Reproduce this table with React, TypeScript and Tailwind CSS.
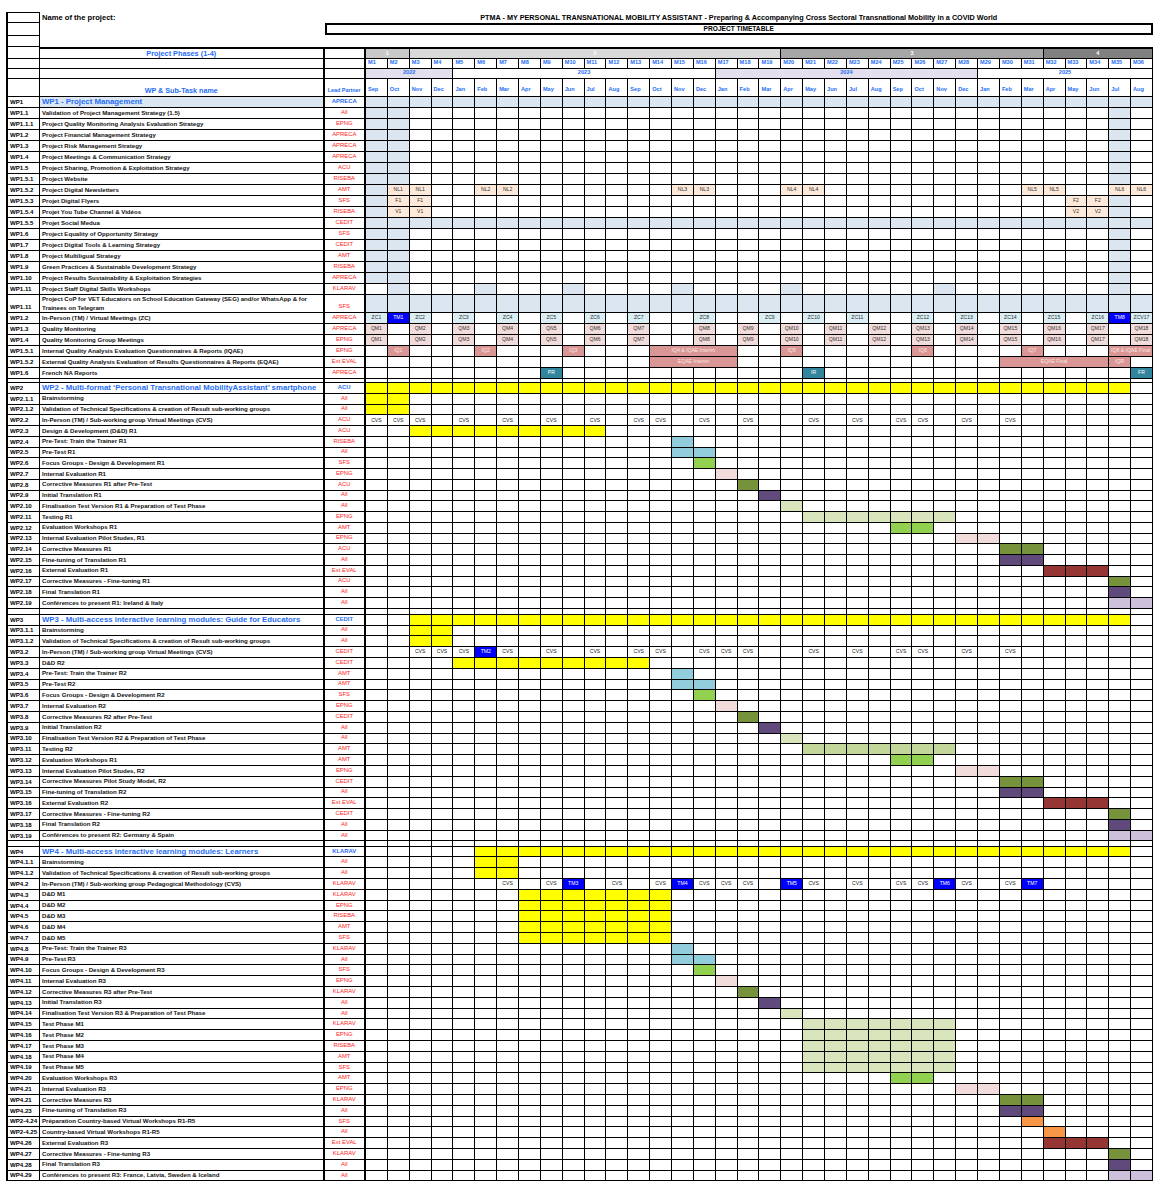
import React from "react";

type C = { s: number; n?: number; k: string; t?: string };
type R = {
  id: string;
  name: string;
  lp: string;
  cells: C[];
  head?: boolean;
  nameBg?: boolean;
  tall?: boolean;
};

const FILL: Record<string, string> = {
  lb: "bg-[#dce6f1]",
  pe: "bg-[#fde9d9] text-[#333]",
  zc: "bg-[#daeef3] text-[#333]",
  tm: "bg-[#0000ff] text-white",
  qm: "bg-[#f2dcdb] text-[#333]",
  iq: "bg-[#da9694] text-[#fbe7e6]",
  pr: "bg-[#31859c] text-white",
  y: "bg-[#ffff00]",
  tq: "bg-[#92cddc]",
  gr: "bg-[#92d050]",
  pk: "bg-[#f2dcdb]",
  ol: "bg-[#76933c]",
  pu: "bg-[#604a7b]",
  lg: "bg-[#d8e4bc]",
  lg2: "bg-[#c4d79b]",
  dr: "bg-[#963634]",
  lv: "bg-[#ccc0da]",
  or: "bg-[#f79646]",
  cv: "text-[#222]",
  ph1: "bg-[#c9c9c9] text-white",
  ph2: "bg-[#d9d9d9] text-white",
  ph3: "bg-[#a6a6a6] text-white",
  ph4: "bg-[#808080] text-white",
  yl: "bg-[#e4dfec]",
  yw: "bg-white",
};

const GRID = "grid grid-cols-[34px_284.5px_41.5px_repeat(36,21.86px)]";

const at = (k: string, cols: number[]): C[] => cols.map((s) => ({ s, k }));
const run = (k: string, a: number, b: number): C[] =>
  Array.from({ length: b - a + 1 }, (_, i) => ({ s: a + i, k }));
const txt = (k: string, list: [number, string][]): C[] => list.map(([s, t]) => ({ s, k, t }));
const cvs = (cols: number[]): C[] => cols.map((s) => ({ s, k: "cv", t: "CVS" }));

const LB = [0, 1, 34];

const WP1: R[] = [
  { id: "WP1", name: "WP1 - Project Management", lp: "APRECA", head: true, nameBg: true, cells: run("lb", 0, 35) },
  { id: "WP1.1", name: "Validation of Project Management Strategy (1.5)", lp: "All", cells: at("lb", LB) },
  { id: "WP1.1.1", name: "Project Quality Monitoring Analysis Evaluation Strategy", lp: "EPNG", cells: at("lb", LB) },
  { id: "WP1.2", name: "Project Financial Management Strategy", lp: "APRECA", cells: at("lb", LB) },
  { id: "WP1.3", name: "Project Risk Management Strategy", lp: "APRECA", cells: at("lb", LB) },
  { id: "WP1.4", name: "Project Meetings & Communication Strategy", lp: "APRECA", cells: at("lb", LB) },
  { id: "WP1.5", name: "Project Sharing, Promotion & Exploitation Strategy", lp: "ACU", cells: at("lb", LB) },
  { id: "WP1.5.1", name: "Project Website", lp: "RISEBA", cells: at("lb", LB) },
  {
    id: "WP1.5.2",
    name: "Project Digital Newsletters",
    lp: "AMT",
    cells: [
      { s: 0, k: "lb" },
      ...txt("pe", [
        [1, "NL1"], [2, "NL1"], [5, "NL2"], [6, "NL2"], [14, "NL3"], [15, "NL3"],
        [19, "NL4"], [20, "NL4"], [30, "NL5"], [31, "NL5"], [34, "NL6"], [35, "NL6"],
      ]),
    ],
  },
  {
    id: "WP1.5.3",
    name: "Projet Digital Flyers",
    lp: "SFS",
    cells: [...at("lb", [0, 34]), ...txt("pe", [[1, "F1"], [2, "F1"], [32, "F2"], [33, "F2"]])],
  },
  {
    id: "WP1.5.4",
    name: "Projet You Tube Channel & Vidéos",
    lp: "RISEBA",
    cells: [...at("lb", [0, 34]), ...txt("pe", [[1, "V1"], [2, "V1"], [32, "V2"], [33, "V2"]])],
  },
  { id: "WP1.5.5", name: "Projet Social Medua", lp: "CEDIT", cells: run("lb", 0, 35) },
  { id: "WP1.6", name: "Project Equality of Opportunity Strategy", lp: "SFS", cells: at("lb", LB) },
  { id: "WP1.7", name: "Project Digital Tools & Learning Strategy", lp: "CEDIT", cells: at("lb", LB) },
  { id: "WP1.8", name: "Project Multiligual Strategy", lp: "AMT", cells: at("lb", LB) },
  { id: "WP1.9", name: "Green Practices & Sustainable Development Strategy", lp: "RISEBA", cells: at("lb", LB) },
  { id: "WP1.10", name: "Project Results Sustainability & Exploitation Strategies", lp: "APRECA", cells: at("lb", LB) },
  { id: "WP1.11", name: "Project Staff Digital Skills Workshops", lp: "KLARAV", cells: at("lb", [1, 5, 9, 14, 19, 26, 34]) },
  {
    id: "WP1.11",
    name: "Project CoP for VET Educators on School Education Gateway (SEG) and/or WhatsApp & for Trainees on Telegram",
    lp: "SFS",
    tall: true,
    cells: run("lb", 0, 35),
  },
  {
    id: "WP1.2",
    name: "In-Person (TM) / Virtual Meetings (ZC)",
    lp: "APRECA",
    cells: [
      ...txt("zc", [
        [0, "ZC1"], [2, "ZC2"], [4, "ZC3"], [6, "ZC4"], [8, "ZC5"], [10, "ZC6"], [12, "ZC7"], [15, "ZC8"],
        [18, "ZC9"], [20, "ZC10"], [22, "ZC11"], [25, "ZC12"], [27, "ZC13"], [29, "ZC14"], [31, "ZC15"],
        [33, "ZC16"], [35, "ZCV17"],
      ]),
      ...txt("tm", [[1, "TM1"], [34, "TM8"]]),
    ],
  },
  ...["Quality Monitoring", "Quality Monitoring Group Meetings"].map(
    (name, i): R => ({
      id: i === 0 ? "WP1.3" : "WP1.4",
      name,
      lp: i === 0 ? "APRECA" : "EPNG",
      cells: txt("qm", [
        [0, "QM1"], [2, "QM2"], [4, "QM3"], [6, "QM4"], [8, "QN5"], [10, "QM6"], [12, "QM7"], [15, "QM8"],
        [17, "QM9"], [19, "QM10"], [21, "QM11"], [23, "QM12"], [25, "QM13"], [27, "QM14"], [29, "QM15"],
        [31, "QM16"], [33, "QM17"], [35, "QM18"],
      ]),
    })
  ),
  {
    id: "WP1.5.1",
    name: "Internal Quality Analysis Evaluation Questionnaires & Reports (IQAE)",
    lp: "EPNG",
    cells: [
      ...txt("iq", [[1, "IQ1"], [5, "IQ2"], [9, "IQ3"], [19, "IQ5"], [25, "IQ6"], [30, "IQ7"]]),
      { s: 13, n: 4, k: "iq", t: "IQ4 & IQAE Interim" },
      { s: 34, n: 2, k: "iq", t: "IQ8 & IQAE Final" },
    ],
  },
  {
    id: "WP1.5.2",
    name: "External Quality Analysis Evaluation of Results Questionnaires & Reports (EQAE)",
    lp: "Ext EVAL",
    cells: [
      { s: 13, n: 4, k: "iq", t: "EQAE Interim" },
      { s: 29, n: 5, k: "iq", t: "EQAE Final" },
      { s: 34, k: "iq", t: "IQR" },
    ],
  },
  { id: "WP1.6", name: "French NA Reports", lp: "APRECA", cells: txt("pr", [[8, "PR"], [20, "IR"], [35, "FR"]]) },
];

const tail = (n: string, lpList: string[], names: string[], testCls: string): R[] => {
  const cellsList: C[][] = [
    at("tq", [14]),
    at("tq", [14, 15]),
    at("gr", [15]),
    at("pk", [16]),
    at("ol", [17]),
    at("pu", [18]),
    at("lg", [19]),
    run(testCls, 20, 26),
    at("gr", [24, 25]),
    at("pk", [27, 28]),
    at("ol", [29, 30]),
    at("pu", [29, 30]),
    run("dr", 31, 33),
    at("ol", [34]),
    at("pu", [34]),
    at("lv", [34, 35]),
  ];
  return names.map((name, i) => ({ id: `WP${n}.${i + 4}`, name, lp: lpList[i], cells: cellsList[i] }));
};

const WP2: R[] = [
  { id: "WP2", name: "WP2 - Multi-format \u2018Personal Transnational MobilityAssistant\u2019 smartphone", lp: "ACU", head: true, cells: run("y", 0, 34) },
  { id: "WP2.1.1", name: "Brainstorming", lp: "All", cells: run("y", 0, 1) },
  { id: "WP2.1.2", name: "Validation of Technical Specifications & creation of Result sub-working groups", lp: "All", cells: run("y", 0, 1) },
  { id: "WP2.2", name: "In-Person (TM) / Sub-working group Virtual Meetings (CVS)", lp: "ACU", cells: cvs([0, 1, 2, 4, 6, 8, 10, 12, 13, 15, 17, 20, 22, 24, 25, 27, 29]) },
  { id: "WP2.3", name: "Design & Development (D&D) R1", lp: "ACU", cells: run("y", 2, 10) },
  ...tail(
    "2",
    ["RISEBA", "All", "SFS", "EPNG", "ACU", "All", "All", "EPNG", "AMT", "EPNG", "ACU", "All", "Ext EVAL", "ACU", "All", "All"],
    [
      "Pre-Test: Train the Trainer R1",
      "Pre-Test R1",
      "Focus Groups - Design & Development R1",
      "Internal Evaluation R1",
      "Corrective Measures R1 after Pre-Test",
      "Initial Translation R1",
      "Finalisation Test Version R1 & Preparation of Test Phase",
      "Testing R1",
      "Evaluation Workshops R1",
      "Internal Evaluation Pilot Studes, R1",
      "Corrective Measures R1",
      "Fine-tuning of Translation R1",
      "External Evaluation R1",
      "Corrective Measures - Fine-tuning R1",
      "Final Translation R1",
      "Conférences to present R1: Ireland & Italy",
    ],
    "lg"
  ),
];

const WP3: R[] = [
  { id: "WP3", name: "WP3 - Multi-access interactive learning modules: Guide for Educators", lp: "CEDIT", head: true, cells: run("y", 2, 34) },
  { id: "WP3.1.1", name: "Brainstorming", lp: "All", cells: run("y", 2, 3) },
  { id: "WP3.1.2", name: "Validation of Technical Specifications & creation of Result sub-working groups", lp: "All", cells: run("y", 2, 3) },
  {
    id: "WP3.2",
    name: "In-Person (TM) / Sub-working group Virtual Meetings (CVS)",
    lp: "CEDIT",
    cells: [...cvs([2, 3, 4, 6, 8, 10, 12, 13, 15, 16, 17, 20, 22, 24, 25, 27, 29]), { s: 5, k: "tm", t: "TM2" }],
  },
  { id: "WP3.3", name: "D&D R2", lp: "CEDIT", cells: run("y", 4, 12) },
  ...tail(
    "3",
    ["AMT", "AMT", "SFS", "EPNG", "CEDIT", "All", "All", "AMT", "AMT", "EPNG", "CEDIT", "All", "Ext EVAL", "CEDIT", "All", "All"],
    [
      "Pre-Test: Train the Trainer R2",
      "Pre-Test R2",
      "Focus Groups - Design & Development R2",
      "Internal Evaluation R2",
      "Corrective Measures R2 after Pre-Test",
      "Initial Translation R2",
      "Finalisation Test Version R2 & Preparation of Test Phase",
      "Testing R2",
      "Evaluation Workshops R1",
      "Internal Evaluation Pilot Studes, R2",
      "Corrective Measures Pilot Study Model, R2",
      "Fine-tuning of Translation R2",
      "External Evaluation R2",
      "Corrective Measures - Fine-tuning R2",
      "Final Translation R2",
      "Conférences to present R2: Germany & Spain",
    ],
    "lg2"
  ),
];

const WP4: R[] = [
  { id: "WP4", name: "WP4 - Multi-access interactive learning modules: Learners", lp: "KLARAV", head: true, cells: run("y", 5, 34) },
  { id: "WP4.1.1", name: "Brainstorming", lp: "All", cells: run("y", 5, 6) },
  { id: "WP4.1.2", name: "Validation of Technical Specifications & creation of Result sub-working groups", lp: "All", cells: run("y", 5, 6) },
  {
    id: "WP4.2",
    name: "In-Person (TM) /  Sub-working group Pedagogical Methodology (CVS)",
    lp: "KLARAV",
    cells: [
      ...cvs([6, 8, 11, 13, 15, 16, 17, 20, 22, 24, 25, 27, 29]),
      ...txt("tm", [[9, "TM3"], [14, "TM4"], [19, "TM5"], [26, "TM6"], [30, "TM7"]]),
    ],
  },
  { id: "WP4.3", name: "D&D M1", lp: "KLARAV", cells: run("y", 7, 13) },
  { id: "WP4.4", name: "D&D M2", lp: "EPNG", cells: run("y", 7, 13) },
  { id: "WP4.5", name: "D&D M3", lp: "RISEBA", cells: run("y", 7, 13) },
  { id: "WP4.6", name: "D&D M4", lp: "AMT", cells: run("y", 7, 13) },
  { id: "WP4.7", name: "D&D M5", lp: "SFS", cells: run("y", 7, 13) },
  { id: "WP4.8", name: "Pre-Test: Train the Trainer R3", lp: "KLARAV", cells: at("tq", [14]) },
  { id: "WP4.9", name: "Pre-Test R3", lp: "All", cells: at("tq", [14, 15]) },
  { id: "WP4.10", name: "Focus Groups - Design & Development R3", lp: "SFS", cells: at("gr", [15]) },
  { id: "WP4.11", name: "Internal Evaluation R3", lp: "EPNG", cells: at("pk", [16]) },
  { id: "WP4.12", name: "Corrective Measures R3 after Pre-Test", lp: "KLARAV", cells: at("ol", [17]) },
  { id: "WP4.13", name: "Initial Translation R3", lp: "All", cells: at("pu", [18]) },
  { id: "WP4.14", name: "Finalisation Test Version R3 & Preparation of Test Phase", lp: "All", cells: at("lg", [19]) },
  { id: "WP4.15", name: "Test Phase M1", lp: "KLARAV", cells: run("lg", 20, 26) },
  { id: "WP4.16", name: "Test Phase M2", lp: "EPNG", cells: run("lg", 20, 26) },
  { id: "WP4.17", name: "Test Phase M3", lp: "RISEBA", cells: run("lg", 20, 26) },
  { id: "WP4.18", name: "Test Phase M4", lp: "AMT", cells: run("lg", 20, 26) },
  { id: "WP4.19", name: "Test Phase M5", lp: "SFS", cells: run("lg", 20, 26) },
  { id: "WP4.20", name: "Evaluation Workshops R3", lp: "AMT", cells: at("gr", [24, 25]) },
  { id: "WP4.21", name: "Internal Evaluation R3", lp: "EPNG", cells: at("pk", [27, 28]) },
  { id: "WP4.21", name: "Corrective Measures R3", lp: "KLARAV", cells: at("ol", [29, 30]) },
  { id: "WP4.23", name: "Fine-tuning of Translation R3", lp: "All", cells: at("pu", [29, 30]) },
  { id: "WP2-4.24", name: "Préparation Country-based Virtual Workshops R1-R5", lp: "SFS", cells: at("or", [30]) },
  { id: "WP2-4.25", name: "Country-based Virtual Workshops R1-R5", lp: "All", cells: at("or", [31]) },
  { id: "WP4.26", name: "External Evaluation R3", lp: "Ext EVAL", cells: run("dr", 31, 33) },
  { id: "WP4.27", name: "Corrective Measures - Fine-tuning R3", lp: "KLARAV", cells: at("ol", [34]) },
  { id: "WP4.28", name: "Final Translation R3", lp: "All", cells: at("pu", [34]) },
  { id: "WP4.29", name: "Conférences to present R3: France, Latvia, Sweden & Iceland", lp: "All", cells: at("lv", [34, 35]) },
];

const BLUE = "text-[#1f6ef5]";

function MonthCells({ cells, cls }: { cells: C[]; cls: string }) {
  const map = new Map<number, C>();
  cells.forEach((c) => map.set(c.s, c));
  const out: React.ReactNode[] = [];
  for (let i = 0; i < 36; ) {
    const c = map.get(i);
    const n = c?.n ?? 1;
    out.push(
      <div
        key={i}
        className={`flex items-center justify-center overflow-hidden whitespace-nowrap border-r border-b border-black leading-none ${cls} ${c ? FILL[c.k] : ""}`}
        style={n > 1 ? { gridColumn: `span ${n}` } : undefined}
      >
        {c?.t}
      </div>
    );
    i += n;
  }
  return <>{out}</>;
}

function Row({ r, h }: { r: R; h: string }) {
  const align = r.tall ? "items-end pb-[2px]" : "items-center";
  return (
    <div className={`${GRID} ${r.tall ? "h-[18px]" : h}`}>
      <div className={`flex ${align} overflow-hidden whitespace-nowrap border-l-2 border-r border-b border-black pl-[2px] text-[6.1px] font-bold leading-none text-black`}>
        {r.id}
      </div>
      <div
        className={`flex items-center overflow-hidden border-r-2 border-b border-black pl-[2px] font-bold ${
          r.head ? `text-[7.8px] leading-none whitespace-nowrap ${BLUE}` : "text-[6.1px] leading-[8.6px] text-[#111]"
        } ${r.nameBg ? "bg-[#dce6f1]" : ""}`}
      >
        {r.name}
      </div>
      <div
        className={`flex ${align} justify-center overflow-hidden whitespace-nowrap border-r-2 border-b border-black text-[5.9px] leading-none ${
          r.head ? `${BLUE} font-bold` : "text-[#ff2424]"
        }`}
      >
        {r.lp}
      </div>
      <MonthCells cells={r.cells} cls="text-[5.1px]" />
    </div>
  );
}

function Spacer({ h }: { h: string }) {
  return (
    <div className={`${GRID} ${h}`}>
      <div className="border-l-2 border-r border-b border-black" />
      <div className="border-r-2 border-b border-black" />
      <div className="border-r-2 border-b border-black" />
      <MonthCells cells={[]} cls="" />
    </div>
  );
}

const MONTHS = ["Sep", "Oct", "Nov", "Dec", "Jan", "Feb", "Mar", "Apr", "May", "Jun", "Jul", "Aug"];

export default function App() {
  return (
    <div className="min-h-[1186px] bg-white pt-[12px] pl-[6px] font-['Liberation_Sans',Arial,sans-serif] text-black">
      <div className="w-[1147px]">
        {/* Row 1 */}
        <div className={`${GRID} h-[11px]`}>
          <div className="border-l-2 border-t border-r border-b border-black" />
          <div className="flex items-center pl-[2px] text-[7.6px] font-bold leading-none">Name of the project:</div>
          <div className="col-[3/-1] flex items-center justify-center whitespace-nowrap text-[7.25px] font-bold leading-none">
            PTMA - MY PERSONAL TRANSNATIONAL MOBILITY ASSISTANT - Preparing &amp; Accompanying Cross Sectoral Transnational Mobility in a COVID World
          </div>
        </div>
        {/* Row 2 */}
        <div className={`${GRID} h-[12.5px]`}>
          <div className="border-l-2 border-r border-b border-black" />
          <div />
          <div className="col-[3/-1] flex h-[12px] items-center justify-center border-2 border-black text-[6.6px] font-bold leading-none">
            PROJECT TIMETABLE
          </div>
        </div>
        {/* Row 3 */}
        <div className={`${GRID} h-[11px]`}>
          <div className="border-l-2 border-r border-b border-black" />
        </div>
        {/* Row 4 phases */}
        <div className={`${GRID} h-[12.5px]`}>
          <div className="border-l-2 border-r border-b border-black" />
          <div className={`flex items-center justify-center border-t-2 border-r-2 border-b border-black text-[7.3px] font-bold leading-none ${BLUE}`}>
            Project Phases (1-4)
          </div>
          <div className="border-t-2 border-r-2 border-b border-black" />
          {[
            { n: 2, k: "ph1", t: "1" },
            { n: 17, k: "ph2", t: "2" },
            { n: 12, k: "ph3", t: "3" },
            { n: 5, k: "ph4", t: "4" },
          ].map((p) => (
            <div
              key={p.t}
              className={`flex items-center justify-center border-t-2 border-r border-b border-black text-[5.5px] font-bold leading-none ${FILL[p.k]}`}
              style={{ gridColumn: `span ${p.n}` }}
            >
              {p.t}
            </div>
          ))}
        </div>
        {/* Row 5 M */}
        <div className={`${GRID} h-[9.5px]`}>
          <div className="border-l-2 border-r border-b border-black" />
          <div className="border-r-2 border-b border-black" />
          <div className="border-r-2 border-b border-black" />
          {Array.from({ length: 36 }, (_, i) => (
            <div key={i} className={`flex items-center overflow-hidden whitespace-nowrap border-r border-b border-black pl-[2px] text-[5.6px] font-bold leading-none ${BLUE}`}>
              M{i + 1}
            </div>
          ))}
        </div>
        {/* Row 6 years */}
        <div className={`${GRID} h-[10px]`}>
          <div className="border-l-2 border-r border-b border-black" />
          <div className="border-r-2 border-b border-black" />
          <div className="border-r-2 border-b border-black" />
          {[
            { n: 4, k: "yl", t: "2022" },
            { n: 12, k: "yw", t: "2023" },
            { n: 12, k: "yl", t: "2024" },
            { n: 8, k: "yw", t: "2025" },
          ].map((p) => (
            <div
              key={p.t}
              className={`flex items-center justify-center border-r border-b border-black text-[5.6px] font-bold leading-none ${BLUE} ${FILL[p.k]}`}
              style={{ gridColumn: `span ${p.n}` }}
            >
              {p.t}
            </div>
          ))}
        </div>
        {/* Row 7 months */}
        <div className={`${GRID} h-[18.5px]`}>
          <div className="border-l-2 border-r border-b border-black" />
          <div className={`flex items-end justify-center border-r-2 border-b border-black pb-[2px] text-[7.2px] font-bold leading-none ${BLUE}`}>
            WP &amp; Sub-Task name
          </div>
          <div className={`flex items-end justify-center whitespace-nowrap border-r-2 border-b border-black pb-[3px] text-[5.4px] font-bold leading-none ${BLUE}`}>
            Lead Partner
          </div>
          {Array.from({ length: 36 }, (_, i) => (
            <div key={i} className={`flex items-end border-r border-b border-black pb-[3px] pl-[2px] text-[5.6px] font-bold leading-none ${BLUE}`}>
              {MONTHS[i % 12]}
            </div>
          ))}
        </div>

        {WP1.map((r, i) => (
          <Row key={"a" + i} r={r} h="h-[11px]" />
        ))}
        <Spacer h="h-[4px]" />
        {WP2.map((r, i) => (
          <Row key={"b" + i} r={r} h="h-[10.75px]" />
        ))}
        <Spacer h="h-[6px]" />
        {WP3.map((r, i) => (
          <Row key={"c" + i} r={r} h="h-[10.8px]" />
        ))}
        <Spacer h="h-[5.2px]" />
        {WP4.map((r, i) => (
          <Row key={"d" + i} r={r} h="h-[10.8px]" />
        ))}
      </div>
    </div>
  );
}
